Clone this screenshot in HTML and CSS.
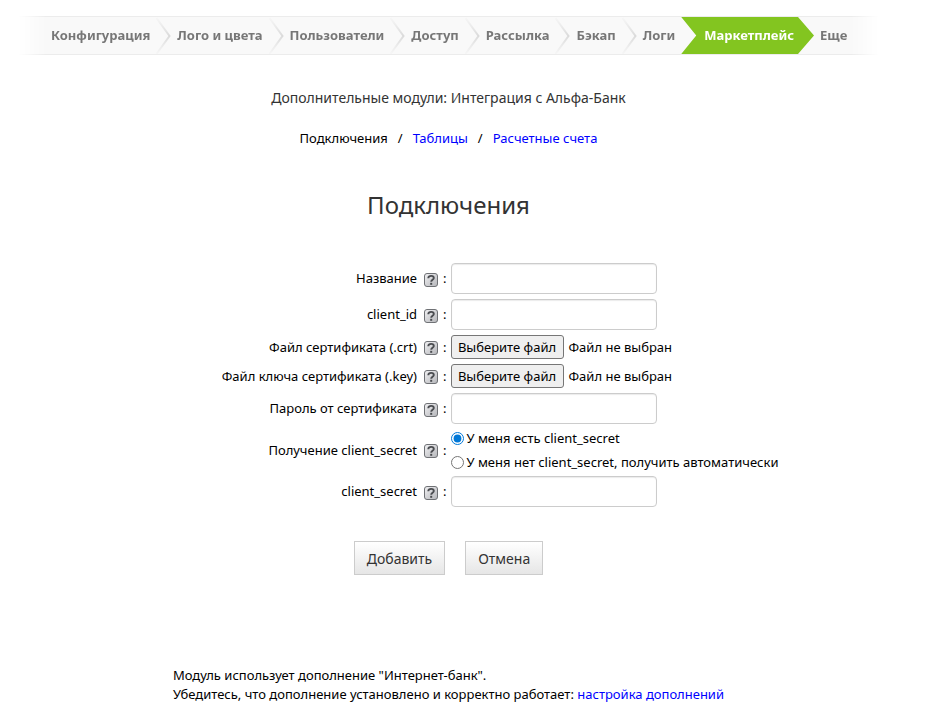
FILE: index.html
```html
<!DOCTYPE html>
<html lang="ru">
<head>
<meta charset="utf-8">
<title>Интеграция с Альфа-Банк</title>
<link rel="stylesheet" href="styles.css">
</head>
<body>
<svg class="sprite" aria-hidden="true">
  <defs>
    <linearGradient id="helpFill" x1="0" y1="0" x2="1" y2="1">
      <stop offset="0" stop-color="#f2f2f4"/>
      <stop offset="1" stop-color="#b4b5b9"/>
    </linearGradient>
    <linearGradient id="arrowFade" gradientUnits="userSpaceOnUse" x1="0" y1="0" x2="0" y2="38">
      <stop offset="0" stop-color="#e4e4e4" stop-opacity="0.1"/>
      <stop offset="0.5" stop-color="#dadada"/>
      <stop offset="1" stop-color="#e4e4e4" stop-opacity="0.1"/>
    </linearGradient>
  </defs>
  <symbol id="help" viewBox="0 0 14 14">
    <rect x="0.5" y="0.5" width="13" height="13" rx="2.5" fill="url(#helpFill)" stroke="#6f7175"/>
    <path d="M4.3 5.3C4.3 3.7 5.4 2.9 7.1 2.9C8.8 2.9 9.8 3.7 9.8 5C9.8 6.8 7.2 6.7 7.2 8.8" fill="none" stroke="#4a4c50" stroke-width="1.9"/>
    <rect x="6.2" y="9.8" width="2" height="2" fill="#4a4c50"/>
  </symbol>
  <symbol id="arrow" viewBox="0 0 15 38">
    <path d="M0.5 1L13.5 19L0.5 37" fill="none" stroke="url(#arrowFade)" stroke-width="2"/>
  </symbol>
</svg>
<div class="page">
  <nav class="steps">
    <a href="#">Конфигурация</a><svg class="arrow"><use href="#arrow"/></svg>
    <a href="#">Лого и цвета</a><svg class="arrow"><use href="#arrow"/></svg>
    <a href="#">Пользователи</a><svg class="arrow"><use href="#arrow"/></svg>
    <a href="#">Доступ</a><svg class="arrow"><use href="#arrow"/></svg>
    <a href="#">Рассылка</a><svg class="arrow"><use href="#arrow"/></svg>
    <a href="#">Бэкап</a><svg class="arrow"><use href="#arrow"/></svg>
    <a href="#">Логи</a>
    <a href="#" class="current">Маркетплейс</a>
    <a href="#">Еще</a>
  </nav>
  <p class="module">Дополнительные модули: Интеграция с Альфа-Банк</p>
  <nav class="tabs">
    <span>Подключения</span><span>/</span><a href="#">Таблицы</a><span>/</span><a href="#">Расчетные счета</a>
  </nav>
  <h1>Подключения</h1>
  <form>
    <div class="row">
      <div class="name"><label for="title">Название</label><svg class="help"><use href="#help"/></svg>:</div>
      <input class="text" type="text" id="title">
    </div>
    <div class="row">
      <div class="name"><label for="client-id">client_id</label><svg class="help"><use href="#help"/></svg>:</div>
      <input class="text" type="text" id="client-id">
    </div>
    <div class="row">
      <div class="name"><label for="crt">Файл сертификата (.crt)</label><svg class="help"><use href="#help"/></svg>:</div>
      <div class="file"><input type="file" id="crt"><label class="pick" for="crt">Выберите файл</label><span>Файл не выбран</span></div>
    </div>
    <div class="row">
      <div class="name"><label for="key">Файл ключа сертификата (.key)</label><svg class="help"><use href="#help"/></svg>:</div>
      <div class="file"><input type="file" id="key"><label class="pick" for="key">Выберите файл</label><span>Файл не выбран</span></div>
    </div>
    <div class="row">
      <div class="name"><label for="password">Пароль от сертификата</label><svg class="help"><use href="#help"/></svg>:</div>
      <input class="text" type="password" id="password">
    </div>
    <div class="row" role="radiogroup" aria-labelledby="obtain">
      <div class="name"><span id="obtain">Получение client_secret</span><svg class="help"><use href="#help"/></svg>:</div>
      <div class="choices">
        <label><input type="radio" name="obtain" checked>У меня есть client_secret</label>
        <label><input type="radio" name="obtain">У меня нет client_secret, получить автоматически</label>
      </div>
    </div>
    <div class="row">
      <div class="name"><label for="secret">client_secret</label><svg class="help"><use href="#help"/></svg>:</div>
      <input class="text" type="text" id="secret">
    </div>
    <div class="actions">
      <button type="submit">Добавить</button>
      <button type="button">Отмена</button>
    </div>
  </form>
  <p class="note">Модуль использует дополнение "Интернет-банк".<br>Убедитесь, что дополнение установлено и корректно работает: <a href="#">настройка дополнений</a></p>
</div>
</body>
</html>
```
FILE: styles.css
```css
* { box-sizing: border-box; }

body {
  margin: 0;
  background: #fff;
  color: #000;
  font: 13px/19px "Noto Sans", "Open Sans", sans-serif;
}

a { color: #00f; text-decoration: none; }

.sprite { position: absolute; width: 0; height: 0; }

.page {
  display: flex;
  flex-direction: column;
  align-items: center;
  padding: 16px 56px 6px 18px;
}

.steps {
  display: flex;
  align-items: center;
  gap: 6px;
  width: 100%;
  height: 39px;
  padding-left: 33px;
  border: solid #ececec;
  border-width: 1px 0;
  background: #f9f9f9;
  -webkit-mask-image: linear-gradient(to right, transparent, #000 28px, #000 calc(100% - 28px), transparent);
  mask-image: linear-gradient(to right, transparent, #000 28px, #000 calc(100% - 28px), transparent);
  font-weight: bold;
  white-space: nowrap;
}

.steps a { color: #777; }

.arrow { flex: none; width: 15px; height: 38px; }

.steps .current {
  padding: 0 20px 0 23px;
  background: #83c520;
  clip-path: polygon(0 0, calc(100% - 16px) 0, 100% 50%, calc(100% - 16px) 100%, 0 100%, 15px 50%);
  color: #fff;
  line-height: 37px;
}

.module { margin: 33px 0 0; color: #333; font-size: 14px; }

.tabs { display: flex; gap: 10px; margin-top: 22px; }

h1 {
  margin: 42px 0 0;
  color: #333;
  font-size: 24px;
  font-weight: normal;
  line-height: 30px;
}

form {
  display: flex;
  flex-direction: column;
  gap: 5px;
  width: 100%;
  margin-top: 43px;
}

.row {
  display: grid;
  grid-template-columns: 1fr 1fr;
  align-items: center;
  gap: 4px;
}

.name {
  display: flex;
  align-items: center;
  justify-content: flex-end;
  gap: 5px;
}

.help { width: 14px; height: 14px; margin: 2px 0 0 2px; }

.text {
  width: 206px;
  height: 31px;
  padding: 4px 8px;
  border: 1px solid #ccc;
  border-radius: 4px;
  box-shadow: inset 0 1px 1px rgba(0, 0, 0, 0.08);
  font: inherit;
}

.file { position: relative; display: flex; align-items: center; gap: 5px; }

.file input { position: absolute; width: 113px; height: 24px; opacity: 0; }

.pick {
  width: 113px;
  border: 1px solid #767676;
  border-radius: 3px;
  background: #efefef;
  line-height: 22px;
  text-align: center;
  white-space: nowrap;
}

.choices { display: flex; flex-direction: column; gap: 6px; }

.choices label { display: flex; align-items: center; gap: 3px; line-height: 18px; white-space: nowrap; }

.choices input { width: 13px; height: 13px; margin: 0; accent-color: #0078d7; }

.actions { display: flex; justify-content: center; gap: 20px; margin-top: 29px; }

.actions button {
  height: 34px;
  padding: 0 12px;
  border: 1px solid #ccc;
  background: linear-gradient(#fff, #e6e6e6);
  color: #333;
  font: inherit;
  font-size: 14px;
}

.note { margin: 91px 0 0; }
```
